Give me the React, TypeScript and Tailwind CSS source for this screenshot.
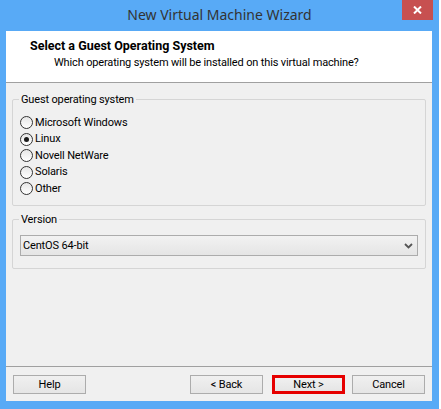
import React from "react";

function Radio({ label, checked }: { label: string; checked?: boolean }) {
  return (
    <div className="flex items-center h-[16.5px]">
      <div className="w-[13px] h-[13px] rounded-full border border-[#333333] bg-gradient-to-b from-[#e6e6e6] to-white flex items-center justify-center">
        {checked && <div className="w-[5px] h-[5px] rounded-full bg-[#1a1a1a]" />}
      </div>
      <span className="ml-[2px] leading-[16px]">{label}</span>
    </div>
  );
}

function Btn({ children, className = "" }: { children: React.ReactNode; className?: string }) {
  return (
    <div
      className={
        "w-[73px] h-[19px] border border-[#acacac] bg-gradient-to-b from-[#f0f0f0] to-[#e5e5e5] flex items-center justify-center leading-[16px] " +
        className
      }
    >
      {children}
    </div>
  );
}

export default function App() {
  return (
    <div className="w-[441px] h-[409px] bg-white flex font-['Roboto','Noto_Sans',sans-serif] text-[11px] tracking-[-0.15px] text-black overflow-hidden">
      <div className="w-[439px] h-[409px] bg-[#58aaf6] flex flex-col">
        <div className="relative h-[31px] flex items-center justify-center">
          <span className="font-['Noto_Sans',sans-serif] text-[14px] tracking-normal text-[#333] leading-[20px] -mt-[1px]">
            New Virtual Machine Wizard
          </span>
          <div className="absolute top-0 right-[6px] w-[31px] h-[20px] bg-[#c75050] flex items-center justify-center">
            <svg width="9" height="8" viewBox="0 0 9 8">
              <path d="M1 0.5 L8 7.5 M8 0.5 L1 7.5" stroke="white" strokeWidth="2" />
            </svg>
          </div>
        </div>
        <div className="ml-[6px] w-[426px] h-[370px] bg-[#f0f0f0] flex flex-col">
          <div className="h-[51px] bg-white pt-[6.5px]">
            <div className="pl-[24px] font-bold text-[12.5px] tracking-normal leading-[16px]">
              Select a Guest Operating System
            </div>
            <div className="pl-[48px] leading-[16px] mt-[1px]">
              Which operating system will be installed on this virtual machine?
            </div>
          </div>
          <div className="h-px bg-[#a0a0a0]" />
          <div className="flex-1 px-[6px] pt-[16px]">
            <div className="relative h-[107px] border border-[#d5d5d5] rounded-[2px] pl-[7px] pt-[14.5px]">
              <span className="absolute -top-[8.5px] left-[6px] px-[2px] bg-[#f0f0f0] leading-[16px]">
                Guest operating system
              </span>
              <Radio label="Microsoft Windows" />
              <Radio label="Linux" checked />
              <Radio label="Novell NetWare" />
              <Radio label="Solaris" />
              <Radio label="Other" />
            </div>
            <div className="relative mt-[13px] h-[50px] border border-[#d5d5d5] rounded-[2px] pl-[7px] pr-[6px] pt-[15px]">
              <span className="absolute -top-[8.5px] left-[6px] px-[2px] bg-[#f0f0f0] leading-[16px]">Version</span>
              <div className="h-[21px] w-[398px] border border-[#acacac] bg-gradient-to-b from-[#f2f2f2] to-[#e5e5e5] flex items-center pl-[2px] pr-[4px]">
                <span className="flex-1 leading-[16px]">CentOS 64-bit</span>
                <svg width="9" height="6" viewBox="0 0 9 6">
                  <path d="M1 1 L4.5 4.5 L8 1" stroke="#555" strokeWidth="1.8" fill="none" />
                </svg>
              </div>
            </div>
          </div>
          <div className="h-px bg-[#a0a0a0]" />
          <div className="h-[34px] pt-[8px] pl-[7px] pr-[7px] flex items-start">
            <Btn>Help</Btn>
            <div className="flex-1" />
            <Btn>&lt; Back</Btn>
            <Btn className="ml-[9px] border-[3px] border-[#e60000]">Next &gt;</Btn>
            <Btn className="ml-[7px]">Cancel</Btn>
          </div>
        </div>
      </div>
    </div>
  );
}
